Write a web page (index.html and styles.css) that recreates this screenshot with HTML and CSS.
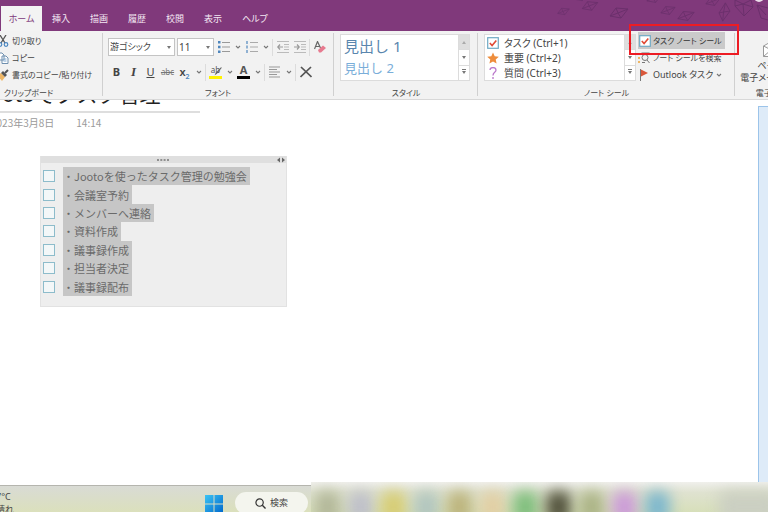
FILE: index.html
```html
<!DOCTYPE html>
<html lang="ja">
<head>
<meta charset="utf-8">
<title>Jootoでタスク管理</title>
<link rel="stylesheet" href="styles.css">
</head>
<body>
<svg class="sprite" aria-hidden="true">
  <symbol id="chev" viewBox="0 0 6 6"><path d="M1 2l2 2 2-2" fill="none" stroke="#777" stroke-width="1.1"/></symbol>
  <symbol id="check" viewBox="0 0 12 12"><rect x=".7" y=".7" width="10.6" height="10.6" fill="#fff" stroke="#6fa9c4" stroke-width="1.2"/><path d="M2.8 6l2.3 2.6 4.2-5" fill="none" stroke="#e04a35" stroke-width="1.6"/></symbol>
  <symbol id="gem" viewBox="0 0 20 14"><path d="M1 10L7 2l12 1-7 9zM1 10l8-3 10-4M7 2l2 5 3 5" fill="none" stroke="#5d2a62" stroke-width="1"/></symbol>
  <symbol id="kite" viewBox="0 0 14 22"><path d="M8 1l5 9-8 11-4-9zM8 1L6 11l7-1M1 12l5-1-1 10" fill="none" stroke="#5d2a62" stroke-width="1"/></symbol>
</svg>

<header class="tabbar">
  <svg class="pattern" viewBox="0 0 218 30" aria-hidden="true">
    <g opacity=".6">
    <use href="#gem" x="6" y="7" width="15" height="9"/>
    <use href="#gem" x="31" y="0" width="18" height="12"/>
    <use href="#gem" x="24" y="-7" width="14" height="9"/>
    <use href="#gem" x="58" y="6" width="22" height="14"/>
    <use href="#gem" x="96" y="-7" width="16" height="11"/>
    <use href="#gem" x="109" y="5" width="18" height="11"/>
    <use href="#gem" x="127" y="9" width="18" height="14"/>
    <use href="#gem" x="154" y="-4" width="18" height="11"/>
    <use href="#kite" x="168" y="2" width="13" height="20"/>
    <path d="M185 0l7-4 9 4 2 7-9 9-9-10zM185 6l8-2 10 3M193 4l1 12M185 0l8 4 8-4" fill="none" stroke="#5d2a62"/>
    <path d="M207 5l4 13 7 2M207 5l11 3M207 5l9 10" fill="none" stroke="#5d2a62"/>
    </g>
    <circle cx="209" cy="-3" r="5" fill="#eadde9"/>
  </svg>
  <nav class="tabs">
    <a class="tab active" href="#home">ホーム</a>
    <a class="tab" href="#insert">挿入</a>
    <a class="tab" href="#draw">描画</a>
    <a class="tab" href="#history">履歴</a>
    <a class="tab" href="#review">校閲</a>
    <a class="tab" href="#view">表示</a>
    <a class="tab" href="#help">ヘルプ</a>
  </nav>
</header>

<div class="ribbon">
  <section class="group clipboard">
    <div class="group-body stack">
      <button class="cmd"><svg class="ico" viewBox="0 0 12 12"><path d="M3 0l5 8M9 0L4 8" stroke="#555" stroke-width="1.3"/><circle cx="3" cy="9.500" r="1.800" fill="none" stroke="#4a86c0" stroke-width="1.2"/><circle cx="9" cy="9.500" r="1.800" fill="none" stroke="#4a86c0" stroke-width="1.2"/></svg>切り取り</button>
      <button class="cmd"><svg class="ico" viewBox="0 0 12 12"><path d="M1 1h4l2 2v5H1zM5 4h4l2 2v5.500H5z" fill="#fff" stroke="#6f8fae"/><path d="M6.500 7h3M6.500 9h3" stroke="#7da7d0"/></svg>コピー</button>
      <button class="cmd"><svg class="ico" viewBox="0 0 12 12"><path d="M0 6l4-2 4 4-3 4z" fill="#efb765"/><path d="M4 4l2-2 4 4-2 2z" fill="#555"/><path d="M8 4l3-3" stroke="#555" stroke-width="2"/></svg>書式のコピー/貼り付け</button>
    </div>
    <h2 class="group-label">クリップボード</h2>
  </section>

  <section class="group font">
    <div class="group-body">
      <div class="tools">
        <span class="pick family"><select aria-label="フォント"><option>游ゴシック</option></select></span>
        <span class="pick size"><select aria-label="フォント サイズ"><option>11</option></select></span>
        <button class="tool" aria-label="箇条書き"><svg class="ico" viewBox="0 0 12 12"><path d="M0 0h2.500v2.500H0zM0 4.800h2.500v2.500H0zM0 9.500h2.500V12H0z" fill="#4f86bd"/><path d="M4 1.500h8M4 6h8M4 10.500h8" stroke="#999"/></svg></button>
        <button class="drop" aria-label="箇条書きの種類"><svg><use href="#chev"/></svg></button>
        <button class="tool" aria-label="段落番号"><svg class="ico" viewBox="0 0 12 12"><path d="M1 0v3M1 4.500v3M1 9v3" stroke="#4f86bd" stroke-width="1.200"/><path d="M4 1.500h8M4 6h8M4 10.500h8" stroke="#aaa"/></svg></button>
        <button class="drop" aria-label="番号の種類"><svg><use href="#chev"/></svg></button>
        <i class="sep"></i>
        <button class="tool" aria-label="インデントを減らす"><svg class="ico" viewBox="0 0 12 12"><path d="M0 .5h12M7 3.500h5M7 6h5M7 8.500h5M0 11.500h12" stroke="#bbb"/><path d="M6 6H1M3 3.500L.8 6 3 8.500" fill="none" stroke="#999" stroke-width="1.200"/></svg></button>
        <button class="tool" aria-label="インデントを増やす"><svg class="ico" viewBox="0 0 12 12"><path d="M0 .5h12M7 3.500h5M7 6h5M7 8.500h5M0 11.500h12" stroke="#bbb"/><path d="M0 6h5M3 3.500L5.200 6 3 8.500" fill="none" stroke="#999" stroke-width="1.200"/></svg></button>
        <i class="sep"></i>
        <button class="tool" aria-label="書式のクリア"><svg class="ico" viewBox="0 0 12 12"><path d="M.5 8L3.500.5 6.500 7M1.500 5.500h4" fill="none" stroke="#666" stroke-width="1.200"/><path d="M4 9l5-4.500 3 2.500-5 4.500H5z" fill="#e77a8f"/></svg></button>
      </div>
      <div class="tools">
        <button class="tool letter"><b>B</b></button>
        <button class="tool letter serif"><i>I</i></button>
        <button class="tool letter"><u>U</u></button>
        <button class="tool strike"><s>abc</s></button>
        <button class="tool sub">x<sub>2</sub></button>
        <button class="drop" aria-label="上付きと下付き"><svg><use href="#chev"/></svg></button>
        <i class="sep"></i>
        <button class="tool mark yellow" aria-label="蛍光ペンの色"><span>ab</span><svg viewBox="0 0 12 9"><path d="M12 0L6.500 7l-2.500 1.500L5 6l5.500-6z" fill="#666"/></svg></button>
        <button class="drop" aria-label="蛍光ペンの種類"><svg><use href="#chev"/></svg></button>
        <button class="tool mark black" aria-label="フォントの色"><b>A</b></button>
        <button class="drop" aria-label="色の種類"><svg><use href="#chev"/></svg></button>
        <i class="sep"></i>
        <button class="tool" aria-label="段落の配置"><svg class="ico" viewBox="0 0 12 12"><path d="M0 1h11M0 3.500h8M0 6h11M0 8.500h8M0 11h11" stroke="#999"/></svg></button>
        <button class="drop" aria-label="配置の種類"><svg><use href="#chev"/></svg></button>
        <i class="sep"></i>
        <button class="tool" aria-label="削除"><svg class="ico" viewBox="0 0 12 12"><path d="M1 1l10.500 10M11 1L.5 11" stroke="#555" stroke-width="1.700"/></svg></button>
      </div>
    </div>
    <h2 class="group-label">フォント</h2>
  </section>

  <section class="group style">
    <div class="group-body">
      <div class="gallery">
        <div class="entries">
          <button class="heading one">見出し 1</button>
          <button class="heading two">見出し 2</button>
        </div>
        <div class="scroller"><button class="off" aria-label="上へ"><i class="up"></i></button><button aria-label="下へ"><i class="down"></i></button><button aria-label="その他"><i class="down more"></i></button></div>
      </div>
    </div>
    <h2 class="group-label">スタイル</h2>
  </section>

  <section class="group notes">
    <div class="group-body columns">
      <div class="gallery">
        <div class="entries">
          <button class="seal"><svg class="ico"><use href="#check"/></svg>タスク (Ctrl+1)</button>
          <button class="seal"><svg class="ico" viewBox="0 0 12 12"><path d="M6 .5l1.700 3.800 4.100.4-3.100 2.700.9 4.100L6 9.400l-3.600 2.100.9-4.100L.2 4.700l4.100-.4z" fill="#ee8d3c"/></svg>重要 (Ctrl+2)</button>
          <button class="seal"><svg class="ico" viewBox="0 0 12 12"><path d="M3 3C3-.3 9-.3 9 3c0 2.500-3 2.200-3 5.500" fill="none" stroke="#bb79cb" stroke-width="1.300"/><circle cx="6" cy="11" r=".9" fill="#bb79cb"/></svg>質問 (Ctrl+3)</button>
        </div>
        <div class="scroller"><button class="off" aria-label="上へ"><i class="up"></i></button><button aria-label="下へ"><i class="down"></i></button><button aria-label="その他"><i class="down more"></i></button></div>
      </div>
      <div class="stack">
        <div class="callout"><button class="cmd pressed"><svg class="ico"><use href="#check"/></svg>タスク ノート シール</button></div>
        <button class="cmd"><svg class="ico" viewBox="0 0 12 12"><path d="M0 1h2v2H0z" fill="#6fa9c4"/><path d="M0 5h2v2H0zM0 9h2v2H0z" fill="#efb765"/><circle cx="7" cy="5.500" r="3" fill="none" stroke="#777"/><path d="M9 8l2.500 3M3.500 1h8M4 10.500h3" stroke="#777"/></svg>ノート シールを検索</button>
        <button class="cmd wide"><svg class="ico" viewBox="0 0 12 12"><path d="M2.500 0v12" stroke="#777"/><path d="M3 .5l7 3.500-7 3.500z" fill="#d9573a"/></svg>Outlook タスク<svg class="mini"><use href="#chev"/></svg></button>
      </div>
    </div>
    <h2 class="group-label">ノート シール</h2>
  </section>

  <section class="group email">
    <button class="group-body mail"><svg viewBox="0 0 24 18"><path d="M.5 7L12 .5 23.500 7v10.500H.5zM.5 7L12 13l11.500-6M.5 17.500L8 11" fill="#fff" stroke="#999"/></svg><span>ページを</span><span>電子メールで送信</span></button>
    <h2 class="group-label">電子メール</h2>
  </section>
</div>

<main class="workspace">
  <article class="page">
    <h1 class="title">Jootoでタスク管理</h1>
    <p class="stamp"><time>2023年3月8日</time><time>14:14</time></p>
    <section class="note">
      <div class="grip"><svg class="dots" viewBox="0 0 12 2"><path d="M0 1h2M3.300 1h2M6.600 1h2M10 1h2" stroke="#777" stroke-width="1.500"/></svg><svg class="arrows" viewBox="0 0 10 6"><path d="M4 .5v5L1 3zM6 .5v5L9 3z" fill="#666"/></svg></div>
      <ul class="tasks">
        <li><label><input type="checkbox"><span>・Jootoを使ったタスク管理の勉強会</span></label></li>
        <li><label><input type="checkbox"><span>・会議室予約</span></label></li>
        <li><label><input type="checkbox"><span>・メンバーへ連絡</span></label></li>
        <li><label><input type="checkbox"><span>・資料作成</span></label></li>
        <li><label><input type="checkbox"><span>・議事録作成</span></label></li>
        <li><label><input type="checkbox"><span>・担当者決定</span></label></li>
        <li><label><input type="checkbox"><span>・議事録配布</span></label></li>
      </ul>
    </section>
  </article>
  <aside class="sidebar"></aside>
</main>

<footer class="taskbar">
  <div class="weather"><span>7°C</span><span>晴れ</span></div>
  <button class="start" aria-label="スタート"><svg viewBox="0 0 18 18"><defs><linearGradient id="win" x2="1" y2="1"><stop offset="0" stop-color="#3cc4f4"/><stop offset="1" stop-color="#0068cc"/></linearGradient></defs><path d="M0 0h8.500v8.500H0zM9.500 0H18v8.500H9.500zM0 9.500h8.500V18H0zM9.500 9.500H18V18H9.500z" fill="url(#win)"/></svg></button>
  <button class="search"><svg viewBox="0 0 12 12"><circle cx="5" cy="5" r="4" fill="none" stroke="#333" stroke-width="1.300"/><path d="M8 8l3.500 3.500" stroke="#333" stroke-width="1.500"/></svg>検索</button>
  <div class="apps"><i class="moss"></i><i class="lilac"></i><i class="gold"></i><i class="slate"></i><i class="tan"></i><i class="peach"></i><i class="green"></i><i class="dark"></i><i class="olive"></i><i class="violet"></i><i class="blue"></i><i class="tray"></i></div>
</footer>
</body>
</html>
```
FILE: styles.css
```css
* { box-sizing: border-box; }

body {
  margin: 0;
  height: 100vh;
  display: flex;
  flex-direction: column;
  overflow: hidden;
  background: #fff;
  color: #444;
  font: 10px/16px "Noto Sans", "Noto Sans CJK JP", sans-serif;
  font-feature-settings: "palt";
}

button, select {
  font: inherit;
  font-feature-settings: inherit;
  color: inherit;
  background: none;
  border: 0;
  padding: 0;
  margin: 0;
  white-space: nowrap;
}

h1, h2, p, ul { margin: 0; padding: 0; font-weight: 400; }
svg { display: block; flex: none; }
.sprite { position: absolute; width: 0; height: 0; }
.ico { width: 12px; height: 12px; }

/* Tab bar */
.tabbar {
  position: relative;
  flex: none;
  padding: 6px 0 0 1px;
  background: #80397b;
}
.pattern { position: absolute; top: 0; right: 0; width: 218px; height: 30px; }
.tabs { display: flex; }
.tab {
  padding: 0 10px;
  font-size: 9px;
  line-height: 25px;
  color: #f4e8f3;
  text-decoration: none;
}
.tab.active { width: 41px; padding: 0; text-align: center; background: #f3f3f3; color: #80397b; }

/* Ribbon, scrolled a little to the left */
.ribbon {
  display: flex;
  flex: none;
  margin-left: -46px;
  background: #f2f2f2;
  border-bottom: 1px solid #d8d8d8;
}
.group {
  display: flex;
  flex-direction: column;
  flex: none;
  padding: 3px 6px 0;
  position: relative;
}
.group:not(:last-child)::after {
  content: "";
  position: absolute;
  top: 2px;
  right: 0;
  bottom: 3px;
  width: 1px;
  background: #d0d0d0;
}
.group-body { height: 52px; }
.group-label { font-size: 8px; line-height: 13px; text-align: center; }
.clipboard { width: 149px; }
.clipboard .stack { padding-left: 37px; }
.font { width: 231px; padding-left: 5px; }
.style { width: 144px; }
.notes { width: 257px; }
.email { width: 80px; padding-left: 0; padding-right: 0; }

.stack { display: flex; flex-direction: column; align-items: flex-start; margin-top: -2px; }
.group-body.stack { height: 54px; }
.cmd { display: flex; align-items: center; gap: 3px; height: 17px; font-size: 8px; }
.wide { font-size: 9px; }
.mini { width: 6px; height: 6px; }

.tools { display: flex; align-items: center; height: 24px; }
.tools:first-child { height: 26px; }
.tool {
  display: flex;
  align-items: center;
  justify-content: center;
  width: 17px;
  height: 18px;
}
.drop { display: flex; align-items: center; justify-content: center; width: 11px; height: 18px; }
.drop svg { width: 6px; height: 6px; }
.sep { width: 1px; height: 17px; margin: 0 1px; background: #dcdcdc; }
.letter { font-size: 11px; }
.serif { font-family: "Liberation Serif", serif; font-size: 13px; font-weight: 700; }
.strike { font-size: 8px; color: #777; }
.sub { font-size: 11px; font-weight: 600; }
.sub sub { font-size: 7px; line-height: 8px; color: #4f86bd; align-self: flex-end; }
.mark {
  position: relative;
  width: 13px;
  height: 14px;
  margin: 0 2px;
  align-items: flex-start;
  border-bottom: 3px solid;
  line-height: 10px;
}
.mark b { font-size: 11px; }
.mark span { font-size: 8px; color: #555; }
.mark svg { position: absolute; right: 0; bottom: 0; width: 11px; height: 9px; }
.yellow { border-color: #fff200; }
.black { border-color: #000; color: #555; }

.pick { position: relative; display: flex; height: 18px; background: #fff; border: 1px solid #c4c4c4; }
.pick::after, .up, .down {
  content: "";
  border: 2px solid transparent;
  border-top: 3px solid #777;
  border-bottom: 0;
}
.pick::after { position: absolute; right: 3px; top: 7px; pointer-events: none; }
.pick select { appearance: none; width: 100%; padding-left: 1px; color: #444; }
.family { width: 67px; margin-right: 2px; }
.family select { font-size: 9px; }
.size { width: 37px; margin-right: 1px; }

.gallery { display: flex; height: 47px; background: #fff; border: 1px solid #dcdcdc; }
.style .gallery { width: 130px; }
.entries { display: flex; flex-direction: column; flex: 1; min-width: 0; }
.scroller { display: flex; flex-direction: column; width: 11px; border-left: 1px solid #dcdcdc; }
.scroller button {
  display: flex;
  flex: 1;
  align-items: center;
  justify-content: center;
  border-bottom: 1px solid #dcdcdc;
}
.scroller button:last-child { border-bottom: 0; }
.scroller .off { background: #dedede; }
.up { border-top: 0; border-bottom: 3px solid #aaa; }
.more { position: relative; }
.more::before { content: ""; position: absolute; left: -2px; top: -5px; width: 4px; height: 1px; background: #777; }

.heading { padding-left: 3px; text-align: left; font-feature-settings: normal; }
.one { font-size: 15px; line-height: 22px; color: #5a86ae; }
.two { font-size: 13px; line-height: 23px; color: #7aaed9; }

.columns { display: flex; gap: 2px; }
.columns .gallery { width: 152px; }
.seal { display: flex; align-items: center; gap: 5px; height: 15px; padding-left: 2px; }
.callout { position: relative; }
.callout::after {
  content: "";
  position: absolute;
  inset: -8px -14px -6px -9px;
  border: 2px solid #ed1c24;
  z-index: 2;
  pointer-events: none;
}
.pressed { width: 87px; background: #cacaca; color: #333; padding-left: 1px; gap: 2px; }

.mail { display: flex; flex-direction: column; align-items: center; font-size: 9px; line-height: 12px; }
.mail svg { width: 24px; height: 18px; margin: 5px 0 3px; }

/* Notebook page */
.workspace { display: flex; flex: 1; min-height: 0; overflow: hidden; }
.page { flex: 1; padding-left: 40px; }
.title {
  width: 222px;
  margin: -20px 0 0 -62px;
  padding-bottom: 5px;
  border-bottom: 2px solid #dedede;
  font: 21px/26px "Noto Sans CJK JP", sans-serif;
  color: #222;
  white-space: nowrap;
}
.stamp { display: flex; gap: 22px; margin: 2px 0 0 -49px; color: #9a9a9a; font-family: "Noto Sans CJK JP", sans-serif; font-feature-settings: normal; }
.note { width: 247px; margin-top: 25px; padding-bottom: 10px; background: #eee; border: 1px solid #e2e2e2; border-top: 0; }
.grip { display: flex; align-items: center; height: 7px; background: #dfdfdf; }
.dots { width: 12px; height: 2px; margin-left: auto; }
.arrows { width: 10px; height: 6px; margin-left: 107px; }
.tasks { display: flex; flex-direction: column; height: 129px; margin-top: 4px; list-style: none; }
.tasks li { flex: 1; display: flex; }
.tasks label { display: flex; align-items: center; gap: 8px; padding-left: 2px; }
.tasks input { appearance: none; width: 12px; height: 12px; margin: 0; border: 1px solid #8dbccb; background: #f3f7f8; }
.tasks span {
  display: flex;
  align-items: center;
  align-self: stretch;
  padding-right: 3px;
  background: #c6c6c6;
  color: #6a6a6a;
  font: 11px/16px "Noto Sans CJK JP", sans-serif;
  font-feature-settings: normal;
  white-space: nowrap;
}
.sidebar { width: 10px; margin-top: 6px; background: #deebf8; border: 1px solid #9cc4ea; border-width: 1px 0 0 1px; }

/* Taskbar */
.taskbar {
  display: flex;
  flex: none;
  height: 27px;
  border-top: 1px solid #b5b5ae;
  background: linear-gradient(#d9dbd5, #dbe0bc);
}
.weather { display: flex; flex-direction: column; width: 205px; margin-left: -4px; padding-top: 4px; font-size: 9px; line-height: 13px; }
.start { margin: 9px 0 0 4px; height: 18px; }
.start svg { width: 18px; height: 18px; }
.search {
  display: flex;
  align-items: center;
  justify-content: center;
  gap: 4px;
  width: 73px;
  height: 22px;
  margin: 6px 3px 0 12px;
  border-radius: 11px;
  background: #f4f5ee;
  font-size: 9px;
}
.search svg { width: 11px; height: 11px; }
.apps {
  display: flex;
  flex: 1;
  height: 30px;
  margin-top: -4px;
  background: linear-gradient(#f0f0ec, #dfe2d0 35%, #d7dfba);
  overflow: hidden;
}
.apps i { width: 25px; height: 32px; margin: 9px 4px 0; border-radius: 8px; filter: blur(7px); flex: none; }
.moss { background: #b3b89a; }
.lilac { background: #bfc0ca; }
.gold { background: #d7cd75; }
.slate { background: #b2c6bf; }
.tan { background: #bdb57e; }
.peach { background: #e2cfa5; }
.green { background: #80bf7e; }
.dark { background: #55553f; }
.olive { background: #acb487; }
.violet { background: #cc9cd8; }
.blue { background: #7fb8cd; }
.apps .tray { width: 60px; margin-left: 45px; background: #cbcfc2; }
```
